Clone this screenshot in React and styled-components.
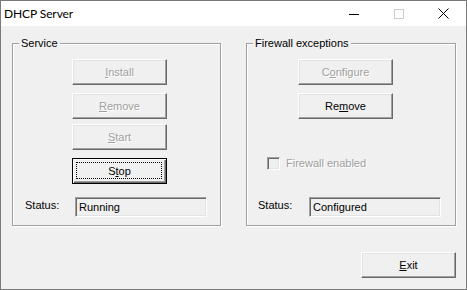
import React from "react";
import styled, { createGlobalStyle } from "styled-components";

const GlobalStyle = createGlobalStyle`
  html, body {
    margin: 0;
    padding: 0;
    background: #ffffff;
  }
  * {
    box-sizing: border-box;
  }
`;

function App() {
  return (
    <>
      <GlobalStyle />
      <Window>
        <TitleBar>
          <Title>DHCP Server</Title>
          <Caption>
            <CaptionButton>
              <svg width="10" height="10" viewBox="0 0 10 10">
                <path d="M0 5.5H10" stroke="#000" strokeWidth="1" />
              </svg>
            </CaptionButton>
            <CaptionButton>
              <svg width="10" height="10" viewBox="0 0 10 10">
                <rect x="0.5" y="0.5" width="9" height="9" fill="none" stroke="#cccccc" strokeWidth="1" />
              </svg>
            </CaptionButton>
            <CaptionButton>
              <svg width="11" height="11" viewBox="0 0 11 11">
                <path d="M0.5 0.5L10.5 10.5M10.5 0.5L0.5 10.5" stroke="#000" strokeWidth="1" />
              </svg>
            </CaptionButton>
          </Caption>
        </TitleBar>

        <Body>
          <Groups>
            <Group $width={209}>
              <legend>Service</legend>
              <GroupContent $padLeft={12}>
                <PushButton disabled $left={47} $top={0}>
                  <u>I</u>nstall
                </PushButton>
                <PushButton disabled $left={47} $top={8}>
                  <u>R</u>emove
                </PushButton>
                <PushButton disabled $left={47} $top={5}>
                  <u>S</u>tart
                </PushButton>
                <PushButton $default $left={47} $top={8}>
                  S<u>t</u>op
                </PushButton>
                <StatusRow>
                  <StatusLabel $width={50}>Status:</StatusLabel>
                  <StatusField>Running</StatusField>
                </StatusRow>
              </GroupContent>
            </Group>

            <Group $width={210}>
              <legend>Firewall exceptions</legend>
              <GroupContent $padLeft={11}>
                <PushButton disabled $left={40} $top={0}>
                  C<u>o</u>nfigure
                </PushButton>
                <PushButton $left={40} $top={8}>
                  Re<u>m</u>ove
                </PushButton>
                <CheckRow>
                  <CheckBox />
                  <CheckText>Firewall enabled</CheckText>
                </CheckRow>
                <StatusRow>
                  <StatusLabel $width={51}>Status:</StatusLabel>
                  <StatusField>Configured</StatusField>
                </StatusRow>
              </GroupContent>
            </Group>
          </Groups>

          <Footer>
            <PushButton $left={0} $top={0}>
              <u>E</u>xit
            </PushButton>
          </Footer>
        </Body>
      </Window>
    </>
  );
}

const Window = styled.div`
  width: 467px;
  height: 290px;
  border: 1px solid #7a7a7a;
  display: flex;
  flex-direction: column;
  font-family: "Liberation Sans", Arial, sans-serif;
  font-size: 11px;
  color: #000;
`;

const TitleBar = styled.div`
  height: 25px;
  background: #ffffff;
  display: flex;
  align-items: center;
  justify-content: space-between;
  padding-left: 3px;
`;

const Title = styled.div`
  font-family: "Lato", "Noto Sans", sans-serif;
  font-size: 12px;
  letter-spacing: -0.1px;
  padding-bottom: 1px;
`;

const Caption = styled.div`
  display: flex;
  height: 100%;
`;

const CaptionButton = styled.div`
  width: 45px;
  height: 100%;
  display: flex;
  align-items: center;
  justify-content: center;

  svg {
    display: block;
  }
`;

const Body = styled.div`
  flex: 1;
  background: #f0f0f0;
  padding: 11px 10px 0 11px;
  display: flex;
  flex-direction: column;
`;

const Groups = styled.div`
  display: flex;
  gap: 25px;
`;

const Group = styled.fieldset`
  width: ${(p) => p.$width}px;
  height: 189px;
  margin: 0;
  padding: 0;
  min-width: 0;
  border: 1px solid #a0a0a0;
  box-shadow: 1px 1px 0 #ffffff, inset 1px 1px 0 #ffffff;
  display: flex;
  flex-direction: column;

  legend {
    margin-left: 6px;
    padding: 0 2px;
    line-height: 13px;
    font-size: 11px;
    background: #f0f0f0;
  }
`;

const GroupContent = styled.div`
  flex: 1;
  display: flex;
  flex-direction: column;
  align-items: flex-start;
  padding: 9px 0 8px ${(p) => p.$padLeft}px;
`;

const PushButton = styled.button`
  position: relative;
  width: 95px;
  height: 26px;
  margin: ${(p) => p.$top}px 0 0 ${(p) => p.$left}px;
  padding: 0 0 1px;
  font-family: "Liberation Sans", Arial, sans-serif;
  font-size: 11px;
  color: #000;
  background: #f0f0f0;
  border: 1px solid;
  border-color: ${(p) => (p.$default ? "#000" : "#ffffff #696969 #696969 #ffffff")};
  box-shadow: ${(p) =>
    p.$default
      ? "inset 1px 1px 0 #ffffff, inset -1px -1px 0 #696969, inset -2px -2px 0 #a0a0a0"
      : "inset -1px -1px 0 #a0a0a0, inset 1px 1px 0 #e3e3e3"};

  &:disabled {
    color: #a0a0a0;
    text-shadow: 1px 1px 0 #ffffff;
  }

  &::after {
    content: "";
    display: ${(p) => (p.$default ? "block" : "none")};
    position: absolute;
    inset: 3px 4px 4px 3px;
    border: 1px dotted #000;
  }

  u {
    text-decoration-thickness: 1px;
    text-underline-offset: 1px;
  }
`;

const CheckRow = styled.div`
  display: flex;
  align-items: center;
  gap: 6px;
  margin: 38px 0 0 9px;
  color: #a0a0a0;
  text-shadow: 1px 1px 0 #ffffff;
`;

const CheckBox = styled.span`
  width: 13px;
  height: 13px;
  background: #f0f0f0;
  border: 1px solid;
  border-color: #a0a0a0 #ffffff #ffffff #a0a0a0;
  box-shadow: inset 1px 1px 0 #696969, inset -1px -1px 0 #e3e3e3;
`;

const CheckText = styled.span`
  line-height: 13px;
`;

const StatusRow = styled.div`
  margin-top: auto;
  display: flex;
  align-items: flex-start;
`;

const StatusLabel = styled.span`
  width: ${(p) => p.$width}px;
  line-height: 13px;
  margin-top: 2px;
`;

const StatusField = styled.div`
  width: 132px;
  height: 20px;
  padding: 3px 0 0 3px;
  line-height: 13px;
  background: #f0f0f0;
  border: 1px solid;
  border-color: #a0a0a0 #ffffff #ffffff #a0a0a0;
  box-shadow: inset 1px 1px 0 #696969, inset -1px -1px 0 #e3e3e3;
`;

const Footer = styled.div`
  display: flex;
  justify-content: flex-end;
  margin-top: 26px;

  button {
    margin: 0;
  }
`;

export default App;
